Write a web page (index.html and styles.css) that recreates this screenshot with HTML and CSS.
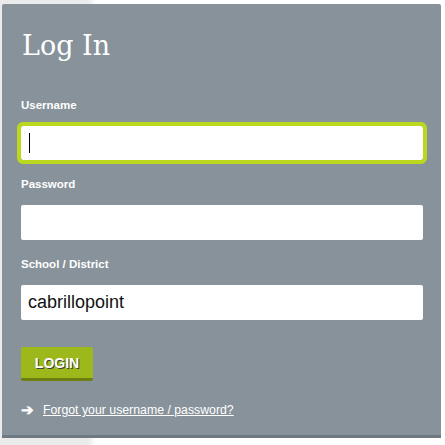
FILE: index.html
```html
<!DOCTYPE html>
<html lang="en">
<head>
    <meta charset="UTF-8">
    <meta name="viewport" content="width=device-width, initial-scale=1.0">
    <title>Log In</title>
    <link rel="stylesheet" href="styles.css">
</head>
<body>
    <div class="login-panel">
        <h1>Log In</h1>
        <form id="loginForm">
            <div class="field">
                <label for="username">Username</label>
                <div class="input-wrap">
                    <input type="text" id="username" name="username" class="focused">
                    <span class="caret"></span>
                </div>
            </div>
            <div class="field">
                <label for="password">Password</label>
                <input type="password" id="password" name="password">
            </div>
            <div class="field">
                <label for="school">School / District</label>
                <input type="text" id="school" name="school" value="cabrillopoint">
            </div>
            <button type="submit">LOGIN</button>
            <p class="forgot"><span class="arrow">&#10132;</span><a href="#" class="link">Forgot your username / password?</a></p>
        </form>
    </div>
</body>
</html>
```

FILE: styles.css
```css
body {
    font-family: "Liberation Sans", Arial, sans-serif;
    background: linear-gradient(to right, #ebebeb 88px, #fff 96px);
    margin: 0;
    height: 445px;
}

.login-panel {
    background-color: #87929a;
    margin: 4px 4px 0 2px;
    padding: 24px 18px 0 19px;
    height: 434px;
    box-sizing: border-box;
    border-bottom: 3px solid #6f7981;
    border-radius: 2px 2px 0 0;
}

h1 {
    font-family: "DejaVu Serif", "Liberation Serif", serif;
    font-weight: normal;
    font-size: 27px;
    line-height: 36px;
    color: #fff;
    margin: 0 0 34px 1px;
}

.field {
    margin-bottom: 17px;
}

label {
    display: block;
    color: #fff;
    font-size: 11.5px;
    font-weight: bold;
    line-height: 14px;
    margin: 0 0 14px 0;
}

.input-wrap {
    position: relative;
}

input {
    display: block;
    width: 100%;
    height: 35px;
    padding: 0 7px;
    border: none;
    border-radius: 2px;
    background-color: #fff;
    font-family: "Liberation Sans", Arial, sans-serif;
    font-size: 18px;
    color: #111;
    box-sizing: border-box;
}

input.focused {
    height: 34px;
    outline: 4px solid #bcd81e;
    outline-offset: 0;
}

.caret {
    position: absolute;
    left: 8px;
    top: 7px;
    width: 1px;
    height: 20px;
    background-color: #000;
}

button {
    display: block;
    margin: 27px 0 0 0;
    width: 72px;
    height: 34px;
    padding: 0;
    border: none;
    border-bottom: 3px solid #6e7f12;
    border-radius: 2px;
    background-color: #9db81b;
    color: #fff;
    font-family: "Liberation Sans", Arial, sans-serif;
    font-size: 14px;
    font-weight: bold;
    text-shadow: 1px 1px 0 #3f4436;
    cursor: pointer;
}

.forgot {
    margin: 20px 0 0 0;
    font-size: 12.3px;
    color: #fff;
    display: flex;
    align-items: center;
}

.arrow {
    font-size: 15px;
    font-weight: bold;
    width: 22px;
}

.link {
    color: #fff;
    text-decoration: underline;
}
```
